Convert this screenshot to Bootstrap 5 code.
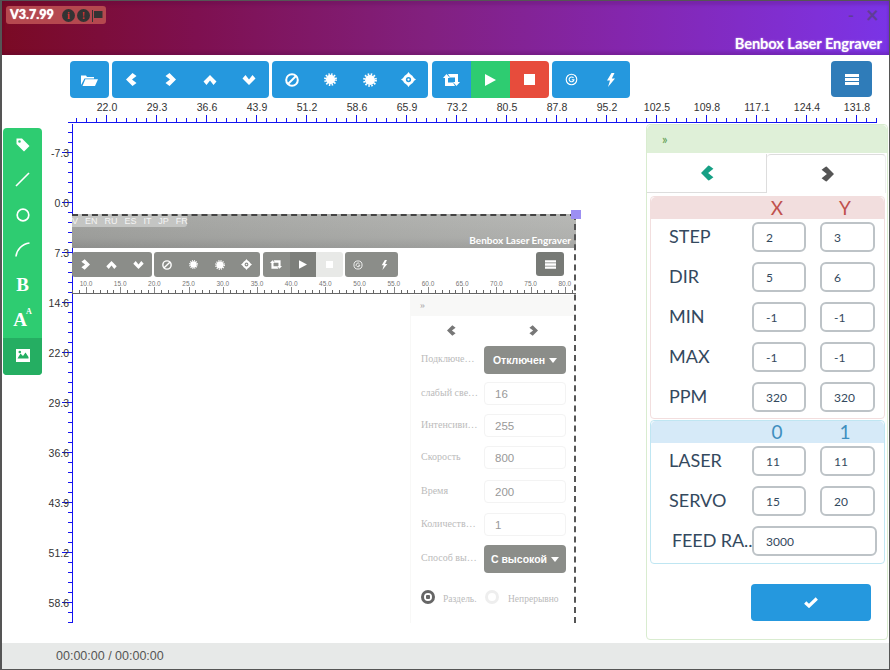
<!DOCTYPE html>
<html lang="en">
<head>
<meta charset="utf-8">
<title>Benbox Laser Engraver</title>
<link href="https://cdn.jsdelivr.net/npm/bootstrap@5.3.0/dist/css/bootstrap.min.css" rel="stylesheet">
<style>
html,body{margin:0;height:670px;overflow:hidden;background:#fff}
body{font-family:Lato,"Liberation Sans",sans-serif;color:#34495e}
.appwin{width:890px;height:670px;border:1px solid #555;border-left-width:2px;background:#fff;overflow:hidden}
.topbar{height:54px;background:linear-gradient(90deg,#7a0a24 0%,#7e1050 22%,#82207f 48%,#8426ad 70%,#7f30d8 92%,#7a34e6 100%);box-shadow:inset 0 -3px 3px rgba(60,0,60,.18),inset 0 4px 3px rgba(60,0,60,.15);position:relative}
.verbadge{position:absolute;left:4px;top:5px;width:100px;height:18px;background:#b5484f;border-radius:3px;color:#fff;font-weight:700;font-size:12.5px;line-height:18px;padding-left:4px;gap:0}
.verbadge b{width:52px;text-shadow:0 0 1px #fff}
.dotico{width:13px;height:13px;border-radius:50%;background:#333;color:#d33;font:700 10px/13px "Liberation Serif",serif;text-align:center;margin-right:2px}
.flagico{width:11px;height:13px;color:#333}
.winbtn{position:absolute;top:2px;color:#5f3d96;font-weight:700;font-size:22px;line-height:24px}
.winbtn.winmin{left:846px;font-size:16px}
.winbtn.winclose{left:864px}
.apptitle{position:absolute;right:7px;top:33px;color:#fff;font-weight:700;font-size:14.6px;line-height:20px;letter-spacing:-.05px;text-shadow:0 0 2px rgba(255,255,255,.55)}
.toolrow{height:37px;margin-top:6px;padding-left:68px;gap:3px}
.tbtn{width:39px;height:37px;padding:0;border:0;border-radius:4px;background:#2598de;color:#fff;display:flex;align-items:center;justify-content:center}
.btn-group>.tbtn,.btn-group>.gbtn{flex:none;margin-left:0!important}
.tbtn:hover{background:#2598de;color:#fff}
.tbtn.tgo{background:#2ecc71}.tbtn.tstop{background:#e74c3c}
.tbtn.tmenu{width:41px;height:36px;background:#2f7cb9;margin-left:auto;margin-right:17px}
.gwid{width:39.25px}
.grpthree{margin-left:1px}
.hruler,.vruler{display:block;overflow:visible}
.hruler{margin-top:2px;height:24px}
.mainrow{height:516px}
.toolside{width:39px;height:247px;margin:4px 0 0 1px;background:#2ecc71;border-radius:4px;overflow:hidden;flex:none}
.sideitem{height:35px;padding-bottom:2px;color:#fff;font:700 19px/1 "Liberation Serif",serif}
.sideitem.on{height:37px;background:#25ae62}
.sideitem sup{font-size:8px;top:-.9em;margin-left:-1px}
.vruler{flex:none}
.stagebox{flex:1 1 0;position:relative;min-width:0}
.ghost{position:absolute;left:-1px;top:90px;width:504px;height:409px;overflow:hidden;font-family:"Liberation Sans",sans-serif}
.ghostline{position:absolute;left:0;top:0;right:0;border-top:2px dashed #444;z-index:2}
.ghostright{position:absolute;right:0;top:0;bottom:0;border-right:2px dashed #555;z-index:2}
.ghandle{position:absolute;left:498px;top:86px;width:10px;height:9px;background:#9c8ff2;z-index:3}
.ghead{height:34px;background-image:linear-gradient(90deg,rgba(0,0,0,.06),rgba(255,255,255,.12)),linear-gradient(180deg,#aeafac 0,#a5a6a3 70%,#969795 100%);position:relative}
.glang{position:absolute;left:0;top:0;width:115px;height:13px;background:#c4c5c3;color:#f4f4f4;font-size:9px;line-height:13px;padding:1px 0 0 0;word-spacing:4.5px;white-space:nowrap;border-bottom-right-radius:3px}
.gtitle{position:absolute;right:5px;top:19px;color:#fff;font:700 10px/14px Lato,sans-serif}
.gtools{height:25px;margin-top:4px;gap:2px}
.gbtn{height:25px;padding:0;border:0;border-radius:3px;background:#8b8d89;color:#fff;display:flex;align-items:center;justify-content:center;width:26.67px;flex:none}
.gbtn:hover{background:#8b8d89;color:#fff}
.gbtn.gdark{background:#7d7f7b}.gbtn.glite{background:#e8e9e7}
.gbtn.gmenu{width:28px;height:24px;background:#777a76;margin-left:auto;margin-right:12px}
.gwide{width:26.5px}
.gruler{display:block;margin-top:2px;overflow:visible}
.gpanel{position:absolute;left:338px;top:81px;width:164px;bottom:0;border-left:1px solid #f8f8f7;color:#bbb;font:10px/12px "Liberation Serif",serif}
.ghead2{height:21px;background:#f8f8f7;color:#aaa;padding-left:9px;line-height:19px}
.gtabs{height:29px;color:#777}
.grow{position:absolute;left:10px;width:145px;display:flex;align-items:center;justify-content:space-between}
.grow>span{white-space:nowrap;padding-bottom:2px}
.gctl{width:82px;height:23px;padding:0 0 0 10px;border:1px solid #f3f3f3;border-radius:4px;background:#fff;font:11.5px/21px "Liberation Sans",sans-serif;color:#999;box-shadow:none}
.gdrop{width:82px;height:28px;padding:0;border:0;border-radius:4px;background:#8b8d89;color:#fff;font:700 10.5px/28px "Liberation Sans",sans-serif;text-align:center}
.gdrop:hover{background:#8b8d89;color:#fff}
.gcaret{display:inline-block;border:4px solid transparent;border-top:5px solid #fff;border-bottom:0;margin-left:4px;vertical-align:1px}
.gradio{position:absolute;width:14px;height:14px;border-radius:50%}
.gradio.rdon{border:3px solid #666;background:radial-gradient(circle,#666 0 2px,#fff 2.5px)}
.gradio.rdoff{border:3px solid #eee;background:#fff}
.gradiotext{position:absolute;font-size:9.5px}
.sidepanel{width:242px;height:516px;flex:none;margin-right:1px;border:1px solid #d9ecd0;border-radius:4px;position:relative;background:#fff}
.panelhead{height:28px;background:#dff0d8;border:0;border-radius:3px 3px 0 0;padding:0 0 0 15px;color:#5a9a4c;font-size:13px;line-height:28px}
.paneltabs{height:40px;margin-top:1px;border:0;flex-wrap:nowrap}
.paneltabs .nav-item{width:120px;flex:none}
.paneltabs .nav-item+.nav-item{width:119px}
.paneltabs .nav-link{height:39px;display:flex;align-items:center;justify-content:center;padding:0 0 0 2px;margin:0;border-radius:0;border:0;color:#16a085;border-bottom:1px solid #ddd;border-right:1px solid #ddd}
.paneltabs .nav-link.active{color:#555;padding:0 0 0 3px;border:1px solid #ddd;border-bottom:0;border-right:1px solid #eee;border-left:0;border-radius:4px 4px 0 0;background:#fff}
.parambox{margin:2px 0 0 3px;width:235px;border-radius:4px;border:1px solid #f2dede;background:#fff}
.parambox.bluebox{margin-top:1px;border-color:#bfe6f2}
.boxhead{height:22px;background:#f2dede;border:0;border-radius:3px 3px 0 0;padding:0 0 0 99px;color:#c0504d;font-size:19px;line-height:22px;gap:14px}
.bluebox .boxhead{background:#d6eaf8;color:#3f8fbf;height:22px}
.boxhead span{width:54px;text-align:center}
.boxbody{padding:3px 0 6px 18px;gap:10px}
.bluebox .boxbody{padding:3px 0 7px 18px}
.paramrow{height:30px}
.paramlabel{width:83px;font-size:18px;line-height:28px;color:#34495e;margin-bottom:0;padding:0;white-space:nowrap}
.paraminp{width:54px;height:30px;padding:0 0 0 12px;border:2px solid #bdc3c7;border-radius:6px;font:12px/26px Lato,sans-serif;color:#34495e;background:#fff;box-shadow:none;flex:none}
.paraminp+.paraminp{margin-left:14px;width:55px}
.paraminp.inpwide{width:125px}
.paramlabel.lblfeed{padding-left:3px;letter-spacing:-.1px}
.okbtn{position:absolute;left:104px;top:459px;width:120px;height:37px;padding:0;border:0;border-radius:4px;background:#2598de;color:#fff;display:flex;align-items:center;justify-content:center}
.okbtn:hover{background:#2598de;color:#fff}
.statusbar{height:26px;margin-top:3px;background:#e7e9e8;color:#555;font:12.5px/26px "Liberation Sans",sans-serif;padding-left:54px}
svg text{font-family:"Liberation Sans",sans-serif}
</style>
</head>
<body>
<svg width="0" height="0" class="position-absolute">
<defs>
<symbol id="i-folder" viewBox="0 0 17 12"><path fill="currentColor" d="M0 11V1.500h5l1 1.500h7v1.500H3.500zM1.500 12 4.300 5.300H17L14 12z"/></symbol>
<symbol id="i-left" viewBox="0 0 11 13"><path fill="currentColor" d="M6.500 0 10.500 3 6 6.500 10.500 10 6.500 13 0 6.500z"/></symbol>
<symbol id="i-right" viewBox="0 0 11 13"><path fill="currentColor" d="M4.500 0 .5 3 5 6.500.5 10l4 3L11 6.500z"/></symbol>
<symbol id="i-up" viewBox="0 0 13 10"><path fill="currentColor" d="M0 6.500 6.500 0 13 6.500 10 10 6.500 5.500 3 10z"/></symbol>
<symbol id="i-down" viewBox="0 0 13 10"><path fill="currentColor" d="M0 3.500 6.500 10 13 3.500 10 0 6.500 4.500 3 0z"/></symbol>
<symbol id="i-ban" viewBox="0 0 14 14"><circle cx="7" cy="7" r="5.800" fill="none" stroke="currentColor" stroke-width="2"/><path d="M3 11 11 3" stroke="currentColor" stroke-width="2"/></symbol>
<symbol id="i-star" viewBox="0 0 14 14"><circle cx="7" cy="7" r="5" fill="currentColor"/><circle cx="7" cy="7" r="5.800" fill="none" stroke="currentColor" stroke-width="2.200" stroke-dasharray="1.520 1.520"/></symbol>
<symbol id="i-target" viewBox="0 0 16 16"><circle cx="8" cy="8" r="4.300" fill="none" stroke="currentColor" stroke-width="3"/><path fill="currentColor" d="M8 0 10.500 3.500h-5zM8 16 5.500 12.500h5zM0 8 3.500 5.500v5zM16 8l-3.500 2.500v-5z"/><circle cx="8" cy="8" r="1.200" fill="currentColor"/></symbol>
<symbol id="i-retweet" viewBox="0 0 17 12"><path fill="currentColor" d="M3.500 0 7 4H5V8.500H10L12 12H2V4H0zM13.500 12 10 8h2V3.500H7L5 0H15V8h2z"/></symbol>
<symbol id="i-play" viewBox="0 0 11 12"><path fill="currentColor" d="M0 0 11 6 0 12z"/></symbol>
<symbol id="i-stop" viewBox="0 0 10 10"><path fill="currentColor" d="M0 0h10v10H0z"/></symbol>
<symbol id="i-reg" viewBox="0 0 14 14"><circle cx="7" cy="7" r="5.700" fill="none" stroke="currentColor" stroke-width="1.200"/><path d="M9.200 5.400A2.600 2.600 0 1 0 9.600 7.300H7.300" fill="none" stroke="currentColor" stroke-width="1.200"/></symbol>
<symbol id="i-flash" viewBox="0 0 10 14"><path fill="currentColor" d="M5.500 0 1 7.500h3L2 14l7-8.500H5.800L8.500 0z"/></symbol>
<symbol id="i-menu" viewBox="0 0 14 11"><path fill="currentColor" d="M0 0h14v3H0zM0 4h14v3H0zM0 8h14v3H0z"/></symbol>
<symbol id="i-check" viewBox="0 0 14 11"><path fill="none" stroke="currentColor" stroke-width="3.200" d="M1.200 5.500 5 9 12.800 1.500"/></symbol>
</defs>
</svg>

<div class="appwin d-flex flex-column">
  <header class="topbar flex-none">
    <div class="verbadge d-flex align-items-center">
      <b>V3.7.99</b>
      <span class="dotico">i</span><span class="dotico">!</span>
      <svg class="flagico" viewBox="0 0 11 13"><path fill="none" stroke="currentColor" d="M.5 1v12"/><path fill="currentColor" d="M2 2h8.500v7H2z"/></svg>
    </div>
    <span class="winbtn winmin">-</span>
    <span class="winbtn winclose">×</span>
    <div class="apptitle">Benbox Laser Engraver</div>
  </header>

  <div class="toolrow d-flex">
    <button class="btn tbtn"><svg width="17" height="12"><use href="#i-folder"/></svg></button>
    <div class="btn-group">
      <button class="btn tbtn gwid"><svg width="11" height="13"><use href="#i-left"/></svg></button>
      <button class="btn tbtn gwid"><svg width="11" height="13"><use href="#i-right"/></svg></button>
      <button class="btn tbtn gwid"><svg width="14" height="10"><use href="#i-up"/></svg></button>
      <button class="btn tbtn gwid"><svg width="14" height="10"><use href="#i-down"/></svg></button>
    </div>
    <div class="btn-group">
      <button class="btn tbtn"><svg width="14" height="14"><use href="#i-ban"/></svg></button>
      <button class="btn tbtn"><svg width="13" height="13"><use href="#i-star"/></svg></button>
      <button class="btn tbtn"><svg width="14" height="14"><use href="#i-star"/></svg></button>
      <button class="btn tbtn"><svg width="15" height="15"><use href="#i-target"/></svg></button>
    </div>
    <div class="btn-group grpthree">
      <button class="btn tbtn"><svg width="17" height="12"><use href="#i-retweet"/></svg></button>
      <button class="btn tbtn tgo"><svg width="11" height="12"><use href="#i-play"/></svg></button>
      <button class="btn tbtn tstop"><svg width="11" height="11"><use href="#i-stop"/></svg></button>
    </div>
    <div class="btn-group">
      <button class="btn tbtn"><svg width="13" height="13"><use href="#i-reg"/></svg></button>
      <button class="btn tbtn"><svg width="10" height="14"><use href="#i-flash"/></svg></button>
    </div>
    <button class="btn tbtn tmenu"><svg width="14" height="11"><use href="#i-menu"/></svg></button>
  </div>

  <svg id="hr" class="hruler" width="888" height="24"></svg>

  <div class="mainrow d-flex">
    <nav class="toolside d-flex flex-column">
      <div class="sideitem d-flex align-items-center justify-content-center"><svg width="14" height="14" viewBox="0 0 14 14"><path fill="#fff" fill-rule="evenodd" d="M.5.5H6L13.500 8 8 13.500.5 6zM3.500 2.200a1.300 1.300 0 1 0 0 2.600 1.300 1.300 0 0 0 0-2.600z"/></svg></div>
      <div class="sideitem d-flex align-items-center justify-content-center"><svg width="15" height="15" viewBox="0 0 15 15"><path d="M1 14 14 1" stroke="#fff" stroke-width="1.600"/></svg></div>
      <div class="sideitem d-flex align-items-center justify-content-center"><svg width="14" height="14" viewBox="0 0 14 14"><circle cx="7" cy="7" r="5.800" fill="none" stroke="#fff" stroke-width="1.700"/></svg></div>
      <div class="sideitem d-flex align-items-center justify-content-center"><svg width="15" height="15" viewBox="0 0 15 15"><path d="M1 14.500C1.800 7.500 7 2 14.500 1" fill="none" stroke="#fff" stroke-width="1.600"/></svg></div>
      <div class="sideitem d-flex align-items-center justify-content-center">B</div>
      <div class="sideitem d-flex align-items-center justify-content-center">A<sup>A</sup></div>
      <div class="sideitem on d-flex align-items-center justify-content-center"><svg width="14" height="13" viewBox="0 0 14 13"><path fill="#fff" d="M0 0h14v13H0z"/><path fill="#25ae62" d="M1.500 9.500 4.500 4.500 7 7 9.500 3.500 12.500 8v1.500z"/><circle cx="3.800" cy="3" r="1.300" fill="#25ae62"/></svg></div>
    </nav>
    <svg id="vr" class="vruler" width="31" height="516"></svg>

    <div class="stagebox">
      <div class="ghost">
        <div class="ghostline"></div>
        <div class="ghostright"></div>
        <div class="ghead">
          <div class="glang">V EN RU ES IT JP FR</div>
          <div class="gtitle">Benbox Laser Engraver</div>
        </div>
        <div class="gtools d-flex">
          <div class="btn-group">
            <button class="btn gbtn"><svg width="9" height="11"><use href="#i-right"/></svg></button>
            <button class="btn gbtn"><svg width="11" height="8"><use href="#i-up"/></svg></button>
            <button class="btn gbtn"><svg width="11" height="8"><use href="#i-down"/></svg></button>
          </div>
          <div class="btn-group">
            <button class="btn gbtn gwide"><svg width="10" height="10"><use href="#i-ban"/></svg></button>
            <button class="btn gbtn gwide"><svg width="9" height="9"><use href="#i-star"/></svg></button>
            <button class="btn gbtn gwide"><svg width="10" height="10"><use href="#i-star"/></svg></button>
            <button class="btn gbtn gwide"><svg width="11" height="11"><use href="#i-target"/></svg></button>
          </div>
          <div class="btn-group grpthree">
            <button class="btn gbtn"><svg width="12" height="9"><use href="#i-retweet"/></svg></button>
            <button class="btn gbtn gdark"><svg width="8" height="9"><use href="#i-play"/></svg></button>
            <button class="btn gbtn glite"><svg width="7" height="7"><use href="#i-stop"/></svg></button>
          </div>
          <div class="btn-group">
            <button class="btn gbtn"><svg width="10" height="10"><use href="#i-reg"/></svg></button>
            <button class="btn gbtn"><svg width="7" height="10"><use href="#i-flash"/></svg></button>
          </div>
          <button class="btn gbtn gmenu"><svg width="11" height="9"><use href="#i-menu"/></svg></button>
        </div>
        <svg id="gr" class="gruler" width="504" height="16"></svg>

        <div class="gpanel">
          <div class="ghead2">»</div>
          <div class="gtabs d-flex">
            <div class="w-50 d-flex align-items-center justify-content-center"><svg width="9" height="11"><use href="#i-left"/></svg></div>
            <div class="w-50 d-flex align-items-center justify-content-center"><svg width="9" height="11"><use href="#i-right"/></svg></div>
          </div>
          <div class="grow" style="top:51px"><span>Подключе…</span><button class="btn gdrop">Отключен<i class="gcaret"></i></button></div>
          <div class="grow" style="top:87px"><span>слабый све…</span><input class="form-control gctl" value="16"></div>
          <div class="grow" style="top:119px"><span>Интенсиви…</span><input class="form-control gctl" value="255"></div>
          <div class="grow" style="top:151px"><span>Скорость</span><input class="form-control gctl" value="800"></div>
          <div class="grow" style="top:185px"><span>Время</span><input class="form-control gctl" value="200"></div>
          <div class="grow" style="top:218px"><span>Количеств…</span><input class="form-control gctl" value="1"></div>
          <div class="grow" style="top:250px"><span>Способ вы…</span><button class="btn gdrop">С высокой<i class="gcaret"></i></button></div>
          <span class="gradio rdon" style="left:10px;top:295px"></span>
          <span class="gradiotext" style="left:32px;top:298px">Раздель.</span>
          <span class="gradio rdoff" style="left:74px;top:295px"></span>
          <span class="gradiotext" style="left:97px;top:298px">Непрерывно</span>
        </div>
      </div>
      <div class="ghandle"></div>
    </div>

    <aside class="sidepanel card">
      <div class="card-header panelhead">»</div>
      <ul class="nav nav-tabs paneltabs">
        <li class="nav-item"><a class="nav-link" href="#"><svg width="13" height="16" viewBox="0 0 11 13"><use href="#i-left"/></svg></a></li>
        <li class="nav-item"><a class="nav-link active" href="#"><svg width="13" height="16" viewBox="0 0 11 13"><use href="#i-right"/></svg></a></li>
      </ul>

      <section class="parambox card">
        <div class="card-header boxhead d-flex"><span>X</span><span>Y</span></div>
        <div class="boxbody d-flex flex-column">
          <div class="paramrow d-flex"><label class="paramlabel">STEP</label><input class="form-control paraminp" value="2"><input class="form-control paraminp" value="3"></div>
          <div class="paramrow d-flex"><label class="paramlabel">DIR</label><input class="form-control paraminp" value="5"><input class="form-control paraminp" value="6"></div>
          <div class="paramrow d-flex"><label class="paramlabel">MIN</label><input class="form-control paraminp" value="-1"><input class="form-control paraminp" value="-1"></div>
          <div class="paramrow d-flex"><label class="paramlabel">MAX</label><input class="form-control paraminp" value="-1"><input class="form-control paraminp" value="-1"></div>
          <div class="paramrow d-flex"><label class="paramlabel">PPM</label><input class="form-control paraminp" value="320"><input class="form-control paraminp" value="320"></div>
        </div>
      </section>

      <section class="parambox bluebox card">
        <div class="card-header boxhead d-flex"><span>0</span><span>1</span></div>
        <div class="boxbody d-flex flex-column">
          <div class="paramrow d-flex"><label class="paramlabel">LASER</label><input class="form-control paraminp" value="11"><input class="form-control paraminp" value="11"></div>
          <div class="paramrow d-flex"><label class="paramlabel">SERVO</label><input class="form-control paraminp" value="15"><input class="form-control paraminp" value="20"></div>
          <div class="paramrow d-flex"><label class="paramlabel lblfeed">FEED RA..</label><input class="form-control paraminp inpwide" value="3000"></div>
        </div>
      </section>

      <button class="btn okbtn"><svg width="14" height="11"><use href="#i-check"/></svg></button>
    </aside>
  </div>

  <footer class="statusbar">00:00:00 / 00:00:00</footer>
</div>

<script>
(function(){
  var NS='http://www.w3.org/2000/svg';
  function line(p,x1,y1,x2,y2,c){var l=document.createElementNS(NS,'line');l.setAttribute('x1',x1);l.setAttribute('y1',y1);l.setAttribute('x2',x2);l.setAttribute('y2',y2);l.setAttribute('stroke',c);l.setAttribute('shape-rendering','crispEdges');p.appendChild(l);}
  function text(p,s,x,y,size,a,c){var t=document.createElementNS(NS,'text');t.textContent=s;t.setAttribute('x',x);t.setAttribute('y',y);t.setAttribute('font-size',size);t.setAttribute('text-anchor',a);t.setAttribute('fill',c);p.appendChild(t);}
  var B='#1414f0';
  var hr=document.getElementById('hr');
  var hv=['22.0','29.3','36.6','43.9','51.2','58.6','65.9','73.2','80.5','87.8','95.2','102.5','109.8','117.1','124.4','131.8'];
  line(hr,66,22.5,875,22.5,B);
  for(var x=77,i=0;x<=877;x+=10,i++){
    var major=((x-107)%50===0);
    line(hr,x-2.5,major?15:18,x-2.5,22,B);
  }
  hv.forEach(function(s,k){text(hr,s,105+50*k,11,10.5,'middle','#333');});
  var vr=document.getElementById('vr');
  line(vr,30.5,0,30.5,499,B);
  var vv=['-7.3','0.0','7.3','14.6','22.0','29.3','36.6','43.9','51.2','58.6'];
  for(var y=133;y<=623;y+=10){
    var m=((y-153)%50===0);
    line(vr,m?20:26,y-124.5,30,y-124.5,B);
  }
  vv.forEach(function(s,k){text(vr,s,27,153+50*k-124+4,10.5,'end','#333');});
  var gr=document.getElementById('gr');
  line(gr,0,14.5,504,14.5,'#666');
  for(var g=0,gx=14-34.2;gx<504;g++,gx+=6.84){
    if(gx<0)continue;
    var mj=(g%5===0);
    line(gr,Math.round(gx),mj?8:11,Math.round(gx),14,mj?'#888':'#666');
  }
  for(var v=10,lx=14;lx<500;v+=5,lx+=34.2){text(gr,v.toFixed(1),lx,7,6.5,'middle','#777');}
})();
</script>
</body>
</html>
